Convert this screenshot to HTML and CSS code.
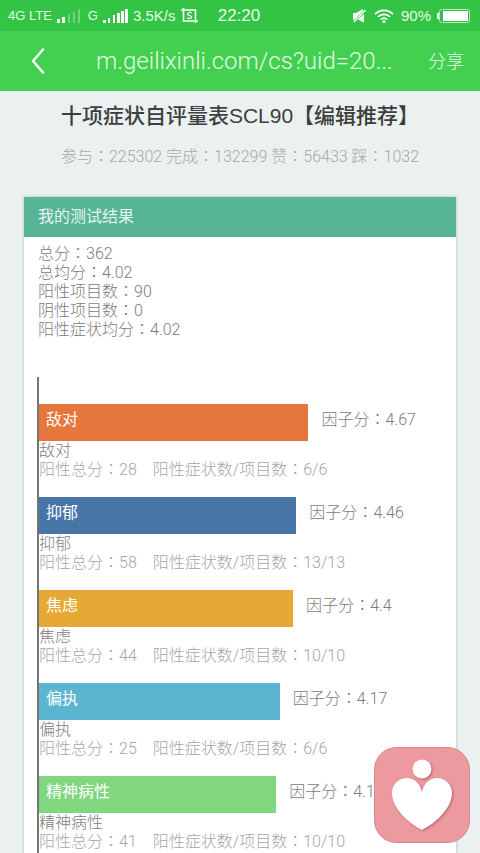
FILE: index.html
```html
<!DOCTYPE html>
<html lang="zh-CN">
    <head>
        <meta charset="utf-8">
        <meta name="viewport" content="width=device-width, initial-scale=1">
        <title>十项症状自评量表SCL90【编辑推荐】</title>
        <link rel="stylesheet" href="styles.css">
    </head>
    <body>
        <div class="status">
            <div class="status-side">
                <span class="small">4G LTE</span>
                <svg width="24" height="14" viewBox="0 0 24 14" fill="#fff">
                    <path d="M0 10h3v4H0zM5 8h3v6H5z"/>
                    <path d="M11 5h2v9h-2zM16 3h2v11h-2zM21 0h2v14h-2z" opacity=".3"/>
                </svg>
                <span class="small network">G</span>
                <svg width="25" height="14" viewBox="0 0 25 14" fill="#fff">
                    <path d="M0 11h3v3H0zM5 9h2v5H5zM10 6h2v8h-2zM14 4h3v10h-3zM18 2h3v12h-3zM22 0h3v14h-3z"/>
                </svg>
                <span class="speed">3.5K/s</span>
                <svg width="17" height="15" viewBox="0 0 17 15" fill="none" stroke="#fff" stroke-width="1.5">
                    <path d="M0 2h14.5v13M2.500 0v13H17"/>
                    <path d="M10.500 5.200C9.500 4 6.500 4.200 6.500 6s4.200 1.200 4.200 3-3.200 2-4.500.7" stroke-width="1.200"/>
                </svg>
            </div>
            <span class="clock">22:20</span>
            <div class="status-side right">
                <svg width="15" height="14" viewBox="0 0 15 14" fill="#fff">
                    <path d="M1 4h3l7-4v2L2 11H1zM12 5v8.500L6 10.500z"/>
                    <path d="M2 13L13.500 1" stroke="#fff" stroke-width="1.300"/>
                </svg>
                <svg class="wifi" width="20" height="14" viewBox="0 0 20 14" fill="none" stroke="#fff" stroke-width="1.700">
                    <path d="M1 5.200C6 .1 14 .1 19 5.200M3.800 8c3.500-3.500 8.900-3.500 12.400 0M6.700 10.600c2-1.900 4.600-1.900 6.600 0"/>
                    <circle cx="10" cy="12.400" r="1.500" fill="#fff" stroke="none"/>
                </svg>
                <span class="speed">90%</span>
                <svg width="34" height="14" viewBox="0 0 34 14">
                    <path d="M3 4H1v6h2" fill="#fff"/>
                    <rect x="3.500" y=".5" width="30" height="13" rx="2" fill="none" stroke="#b5eabb"/>
                    <rect x="7" y="2" width="25" height="10" fill="#fff"/>
                </svg>
            </div>
        </div>

        <header class="nav">
            <button class="back" type="button" aria-label="返回">
                <svg width="14" height="26" viewBox="0 0 14 26" fill="none" stroke="#fff" stroke-width="2.500" stroke-linecap="round" stroke-linejoin="round">
                    <path d="M12 1.500L2 13l10 11.500"/>
                </svg>
            </button>
            <div class="url">m.geilixinli.com/cs?uid=20...</div>
            <button class="share" type="button">分享</button>
        </header>

        <main class="page">
            <h1>十项症状自评量表SCL90【编辑推荐】</h1>
            <p class="counts">参与<span lang="zh-Hant">：</span>225302 完成<span lang="zh-Hant">：</span>132299 赞<span lang="zh-Hant">：</span>56433 踩<span lang="zh-Hant">：</span>1032</p>

            <section class="card">
                <h2>我的测试结果</h2>
                <div class="card-body">
                    <ul class="summary">
                        <li>总分<span lang="zh-Hant">：</span>362</li>
                        <li>总均分<span lang="zh-Hant">：</span>4.02</li>
                        <li>阳性项目数<span lang="zh-Hant">：</span>90</li>
                        <li>阴性项目数<span lang="zh-Hant">：</span>0</li>
                        <li>阳性症状均分<span lang="zh-Hant">：</span>4.02</li>
                    </ul>

                    <!-- bar width = factor score / 7 -->
                    <div class="chart">
                        <div class="factor">
                            <div class="bar-row">
                                <div class="bar orange" style="width: 66.7%">敌对</div>
                                <span class="score">因子分<span lang="zh-Hant">：</span>4.67</span>
                            </div>
                            <div class="name">敌对</div>
                            <div class="detail"><span>阳性总分<span lang="zh-Hant">：</span>28</span><span>阳性症状数/项目数<span lang="zh-Hant">：</span>6/6</span></div>
                        </div>
                        <div class="factor">
                            <div class="bar-row">
                                <div class="bar blue" style="width: 63.7%">抑郁</div>
                                <span class="score">因子分<span lang="zh-Hant">：</span>4.46</span>
                            </div>
                            <div class="name">抑郁</div>
                            <div class="detail"><span>阳性总分<span lang="zh-Hant">：</span>58</span><span>阳性症状数/项目数<span lang="zh-Hant">：</span>13/13</span></div>
                        </div>
                        <div class="factor">
                            <div class="bar-row">
                                <div class="bar yellow" style="width: 62.9%">焦虑</div>
                                <span class="score">因子分<span lang="zh-Hant">：</span>4.4</span>
                            </div>
                            <div class="name">焦虑</div>
                            <div class="detail"><span>阳性总分<span lang="zh-Hant">：</span>44</span><span>阳性症状数/项目数<span lang="zh-Hant">：</span>10/10</span></div>
                        </div>
                        <div class="factor">
                            <div class="bar-row">
                                <div class="bar cyan" style="width: 59.6%">偏执</div>
                                <span class="score">因子分<span lang="zh-Hant">：</span>4.17</span>
                            </div>
                            <div class="name">偏执</div>
                            <div class="detail"><span>阳性总分<span lang="zh-Hant">：</span>25</span><span>阳性症状数/项目数<span lang="zh-Hant">：</span>6/6</span></div>
                        </div>
                        <div class="factor">
                            <div class="bar-row">
                                <div class="bar green" style="width: 58.7%">精神病性</div>
                                <span class="score">因子分<span lang="zh-Hant">：</span>4.1</span>
                            </div>
                            <div class="name">精神病性</div>
                            <div class="detail"><span>阳性总分<span lang="zh-Hant">：</span>41</span><span>阳性症状数/项目数<span lang="zh-Hant">：</span>10/10</span></div>
                        </div>
                    </div>
                </div>
            </section>
        </main>

        <a class="float" href="#" aria-label="首页">
            <svg width="96" height="96" viewBox="0 0 96 96">
                <rect x=".5" y=".5" width="95" height="95" rx="22" fill="#ec9a9f" stroke="#d9868c"/>
                <g class="heart" fill="#fff">
                    <circle cx="48" cy="22" r="9.500"/>
                    <path d="M48 45C46 36 40 31 33 31c-9 0-15 7-15 15 0 15 16 30 30 37 14-7 30-22 30-37 0-8-6-15-15-15-7 0-13 5-15 14z"/>
                </g>
            </svg>
        </a>
    </body>
</html>
```

FILE: styles.css
```css
* {
    box-sizing: border-box;
}

body {
    height: 100vh;
    margin: 0;
    display: flex;
    flex-direction: column;
    background: #ebf1f0;
    color: #7c7c7c;
    font: 300 16px/19px Roboto, "Noto Sans CJK SC", sans-serif;
}

h1, h2, p, ul {
    margin: 0;
    padding: 0;
}

button {
    border: 0;
    padding: 0;
    background: none;
    color: inherit;
    font: inherit;
}

svg {
    display: block;
    flex: none;
}

/* full-width colon centred in its box */
span:lang(zh-Hant) {
    font-family: "Noto Sans CJK TC", sans-serif;
    line-height: 1;
}

/* phone status bar */
.status {
    flex: none;
    display: flex;
    align-items: center;
    height: 31px;
    padding: 0 10px 0 8px;
    background: #33c446;
    color: #e4f9e6;
    font-family: "Liberation Sans", sans-serif;
    font-weight: 400;
}

.status-side {
    flex: 1;
    display: flex;
    align-items: center;
    gap: 5px;
}

.right {
    justify-content: flex-end;
}

.small {
    font-size: 13px;
}

.speed {
    font-size: 15px;
}

.network {
    margin-left: 2px;
}

.wifi {
    margin: 0 2px;
}

.clock {
    font-size: 17px;
}

/* browser bar */
.nav {
    flex: none;
    display: flex;
    align-items: center;
    height: 60px;
    padding: 0 16px 0 31px;
    background: #43cf50;
    color: #e2fae4;
}

.back {
    width: 65px;
}

.url {
    flex: 1;
    font-size: 24px;
    line-height: 30px;
    white-space: nowrap;
}

.share {
    font-size: 18px;
}

.page {
    flex: 1;
    min-height: 0;
    overflow-y: auto;
    scrollbar-width: none;
    padding: 12px 24px;
}

h1 {
    color: #3b403e;
    font-family: "Liberation Sans", "Noto Sans CJK SC", sans-serif;
    font-size: 21px;
    font-weight: 500;
    line-height: 26px;
    text-align: center;
}

.counts {
    margin: 18px 0 31px;
    color: #a3aaa7;
    text-align: center;
}

.card {
    background: #fff;
    box-shadow: 0 0 3px rgba(0, 0, 0, .25);
}

h2 {
    padding: 0 14px;
    background: #58b496;
    color: #e3f5ee;
    font-size: 16px;
    font-weight: 400;
    line-height: 40px;
}

.card-body {
    padding: 7px 13px;
}

.summary {
    padding-left: 1px;
    list-style: none;
}

.chart {
    margin-top: 38px;
    padding: 27px 0 9px;
    border-left: 2px solid #747474;
}

.factor {
    margin-bottom: 18px;
}

.bar-row {
    display: flex;
    line-height: 32px;
    white-space: nowrap;
}

.bar {
    flex: none;
    height: 37px;
    padding-left: 7px;
    color: #fff;
    font-weight: 400;
}

.orange { background: #e7763c; }
.blue { background: #4875a8; }
.yellow { background: #e7a935; }
.cyan { background: #5cb5ce; }
.green { background: #80d77f; }

.score {
    margin-left: 13px;
}

.detail {
    display: flex;
    gap: 16px;
    color: #a6a6a6;
}

/* floating app badge */
.float {
    position: fixed;
    right: 10px;
    bottom: 10px;
}

.heart {
    filter: drop-shadow(1px 1px 1px rgba(130, 40, 50, .5));
}
```
